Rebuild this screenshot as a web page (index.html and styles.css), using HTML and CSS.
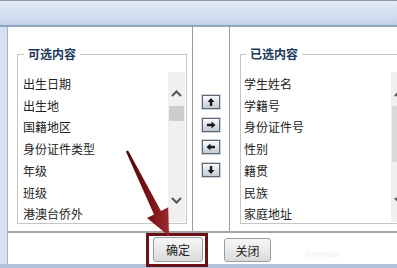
FILE: index.html
```html
<!DOCTYPE html>
<html lang="zh-CN">
<head>
<meta charset="utf-8">
<title>选择字段</title>
<link rel="stylesheet" href="styles.css">
</head>
<body>
<div class="window">
  <div class="titlebar"></div>
  <div class="body">
    <div class="frame-left"></div>
    <div class="content">
      <div class="panels">
        <section class="pane pane-left">
          <fieldset class="group">
            <legend>可选内容</legend>
            <div class="listbox">
              <ul class="items">
                <li>出生日期</li>
                <li>出生地</li>
                <li>国籍地区</li>
                <li>身份证件类型</li>
                <li>年级</li>
                <li>班级</li>
                <li>港澳台侨外</li>
              </ul>
              <div class="scrollbar">
                <div class="sb-up"><svg width="11" height="7" viewBox="0 0 11 7"><polyline points="1,6 5.5,1.5 10,6" fill="none" stroke="#555" stroke-width="2"/></svg></div>
                <div class="sb-thumb"></div>
                <div class="sb-track"></div>
                <div class="sb-down"><svg width="11" height="7" viewBox="0 0 11 7"><polyline points="1,1 5.5,5.5 10,1" fill="none" stroke="#555" stroke-width="2"/></svg></div>
              </div>
            </div>
          </fieldset>
        </section>
        <div class="pane-mid">
          <div class="move-btn"><svg width="16" height="12" viewBox="0 0 16 12"><path d="M8 2 L11.5 6 H9.2 V10 H6.8 V6 H4.5 Z" fill="#1a1a1a"/></svg></div>
          <div class="move-btn"><svg width="16" height="12" viewBox="0 0 16 12"><path d="M12.5 6 L8.5 2.5 V4.8 H4 V7.2 H8.5 V9.5 Z" fill="#1a1a1a"/></svg></div>
          <div class="move-btn"><svg width="16" height="12" viewBox="0 0 16 12"><path d="M3.5 6 L7.5 2.5 V4.8 H12 V7.2 H7.5 V9.5 Z" fill="#1a1a1a"/></svg></div>
          <div class="move-btn"><svg width="16" height="12" viewBox="0 0 16 12"><path d="M8 10 L11.5 6 H9.2 V2 H6.8 V6 H4.5 Z" fill="#1a1a1a"/></svg></div>
        </div>
        <section class="pane pane-right">
          <fieldset class="group">
            <legend>已选内容</legend>
            <div class="listbox">
              <ul class="items">
                <li>学生姓名</li>
                <li>学籍号</li>
                <li>身份证件号</li>
                <li>性别</li>
                <li>籍贯</li>
                <li>民族</li>
                <li>家庭地址</li>
              </ul>
              <div class="scrollbar">
                <div class="sb-up"><svg width="11" height="7" viewBox="0 0 11 7"><polyline points="1,6 5.5,1.5 10,6" fill="none" stroke="#555" stroke-width="2"/></svg></div>
                <div class="sb-thumb sb-thumb-long"></div>
                <div class="sb-track"></div>
                <div class="sb-down"><svg width="11" height="7" viewBox="0 0 11 7"><polyline points="1,1 5.5,5.5 10,1" fill="none" stroke="#555" stroke-width="2"/></svg></div>
              </div>
            </div>
          </fieldset>
        </section>
      </div>
      <div class="footer">
        <button class="btn btn-ok">确定</button>
        <button class="btn btn-close">关闭</button>
        <span class="watermark">Jingyan</span>
      </div>
    </div>
  </div>
  <div class="bottombar"></div>
  <div class="highlight-box"></div>
  <svg class="pointer" width="397" height="268" viewBox="0 0 397 268">
    <defs>
      <linearGradient id="ag" x1="0" y1="0" x2="1" y2="0">
        <stop offset="0" stop-color="#4e070b"/>
        <stop offset="0.55" stop-color="#7a1218"/>
        <stop offset="1" stop-color="#9a2a2e"/>
      </linearGradient>
    </defs>
    <polygon points="125.9,151.6 128.1,150.4 161,210.9 168.2,207.3 169,236 147,218 154,214.5" fill="url(#ag)"/>
  </svg>
</div>
</body>
</html>
```
FILE: styles.css
```css
html, body {
  margin: 0;
  padding: 0;
}
body {
  width: 397px;
  height: 268px;
  overflow: hidden;
  background: #ffffff;
  font-family: "Noto Sans CJK SC", "Noto Sans", sans-serif;
  color: #222;
}
.window {
  position: relative;
  width: 397px;
  height: 268px;
  display: flex;
  flex-direction: column;
  overflow: hidden;
}
.titlebar {
  height: 24px;
  flex: 0 0 auto;
  border-top: 1px solid #8d99aa;
  border-bottom: 2px solid #93a6bf;
  background: linear-gradient(#e4ecf6, #cad8ea 85%, #bcd0e8);
}
.body {
  flex: 1 1 auto;
  display: flex;
  min-height: 0;
}
.frame-left {
  width: 7px;
  flex: 0 0 auto;
  background: #d6e1ef;
  border-right: 1px solid #a5b6cc;
}
.content {
  flex: 1 1 auto;
  min-width: 0;
  display: flex;
  flex-direction: column;
  background: #fff;
}
.panels {
  height: 204px;
  display: flex;
}
.pane {
  box-sizing: border-box;
  padding-top: 19px;
}
.pane-left {
  width: 185px;
  flex: 0 0 auto;
  padding-left: 9px;
  border-right: 1px solid #9c9c9c;
}
.pane-right {
  flex: 1 1 auto;
  min-width: 0;
  overflow: hidden;
  padding-left: 10px;
}
.group {
  box-sizing: border-box;
  width: 170px;
  height: 178px;
  margin: 0;
  padding: 10px 0 0 0;
  border: 1px solid #c6c6c6;
}
.group legend {
  margin-left: 6px;
  padding: 0 4px;
  font-size: 12px;
  line-height: 16px;
  font-weight: bold;
  color: #1b3a5a;
}
.pane-right .group legend {
  margin-left: 5px;
}
.listbox {
  display: flex;
  height: 150px;
  padding-right: 1px;
}
.items {
  list-style: none;
  margin: 0;
  padding: 1px 0 0 5px;
  flex: 1 1 auto;
  font-size: 12px;
  line-height: 21.7px;
  color: #222;
  white-space: nowrap;
}
.pane-right .items {
  padding-left: 3px;
}
.scrollbar {
  width: 17px;
  flex: 0 0 auto;
  display: flex;
  flex-direction: column;
  background: #f0f0f0;
}
.sb-up {
  height: 34px;
  box-sizing: border-box;
  padding-top: 18px;
  display: flex;
  justify-content: center;
  align-items: flex-start;
}
.sb-thumb {
  height: 15px;
  margin: 0 1px;
  background: #cdcdcd;
}
.sb-thumb-long {
  height: 56px;
  background: #d9d9d9;
}
.sb-track {
  flex: 1 1 auto;
}
.sb-down {
  height: 34px;
  box-sizing: border-box;
  padding-top: 9px;
  display: flex;
  justify-content: center;
  align-items: flex-start;
}
.pane-mid {
  width: 36px;
  flex: 0 0 auto;
  border-right: 1px solid #9c9c9c;
  box-sizing: content-box;
  padding-top: 68px;
  padding-left: 0;
  display: flex;
  flex-direction: column;
  align-items: flex-start;
  gap: 8.5px;
}
.move-btn {
  margin-left: 9px;
  width: 16px;
  height: 12px;
  border: 1px solid #5d6876;
  box-shadow: 0 0 0 1px #cfd3d8;
  background: linear-gradient(#fbfcfd, #d9dee4 60%, #c3cad3);
  display: flex;
}
.footer {
  flex: 1 1 auto;
  border-top: 2px solid #a6a6a6;
  display: flex;
  align-items: flex-start;
  padding: 4px 0 0 145px;
  gap: 21px;
}
.btn {
  height: 25px;
  margin: 0;
  padding: 0;
  border: 1px solid #9c9c9c;
  border-radius: 3px;
  background: linear-gradient(#f7f7f7, #e9e9e9 50%, #dadada);
  font-family: "Noto Sans CJK SC", "Noto Sans", sans-serif;
  font-size: 12px;
  color: #222;
}
.btn-ok {
  width: 50px;
}
.btn-close {
  width: 47px;
  margin-top: 1px;
  height: 24px;
}
.watermark {
  margin-left: 14px;
  margin-top: 12px;
  font-family: "DejaVu Sans", sans-serif;
  font-size: 9px;
  color: #eef1f4;
}
.bottombar {
  height: 4px;
  flex: 0 0 auto;
  background: #b0c2d9;
}
.highlight-box {
  position: absolute;
  left: 146px;
  top: 233px;
  width: 62px;
  height: 34px;
  box-sizing: border-box;
  border: 3px solid #6b1218;
}
.pointer {
  position: absolute;
  left: 0;
  top: 0;
  pointer-events: none;
}
```
